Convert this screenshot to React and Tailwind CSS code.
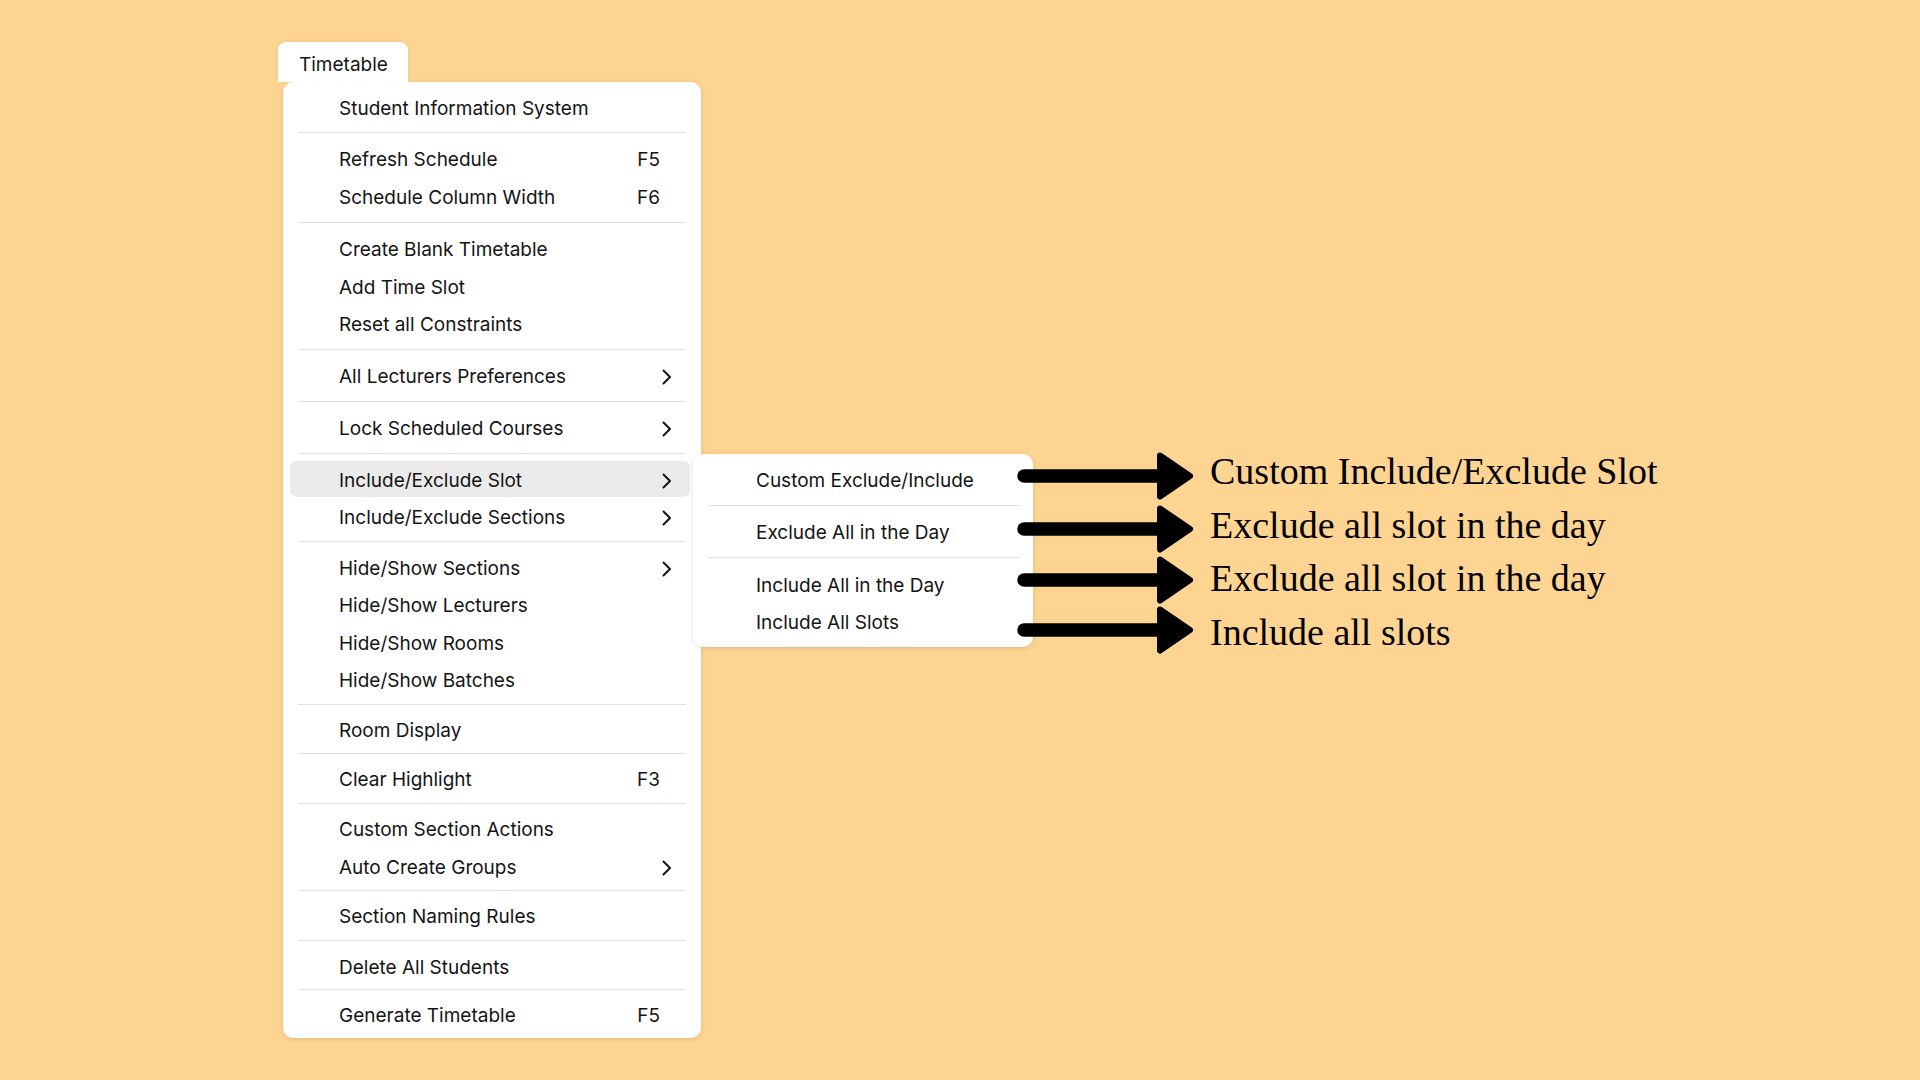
import React from 'react';

// separators carry their own height class (the spacing in the source isn't uniform)
const menu = [
  { label: 'Student Information System' },
  { sep: 'h-[14px]' },
  { label: 'Refresh Schedule', key: 'F5' },
  { label: 'Schedule Column Width', key: 'F6' },
  { sep: 'h-[15px]' },
  { label: 'Create Blank Timetable' },
  { label: 'Add Time Slot' },
  { label: 'Reset all Constraints' },
  { sep: 'h-[14px]' },
  { label: 'All Lecturers Preferences', sub: true },
  { sep: 'h-[15px]' },
  { label: 'Lock Scheduled Courses', sub: true },
  { sep: 'h-[14px]' },
  { label: 'Include/Exclude Slot', sub: true, open: true },
  { label: 'Include/Exclude Sections', sub: true },
  { sep: 'h-[13px]' },
  { label: 'Hide/Show Sections', sub: true },
  { label: 'Hide/Show Lecturers' },
  { label: 'Hide/Show Rooms' },
  { label: 'Hide/Show Batches' },
  { sep: 'h-[12.5px]' },
  { label: 'Room Display' },
  { sep: 'h-[11.5px]' },
  { label: 'Clear Highlight', key: 'F3' },
  { sep: 'h-[12.5px]' },
  { label: 'Custom Section Actions' },
  { label: 'Auto Create Groups', sub: true },
  { sep: 'h-[11.5px]' },
  { label: 'Section Naming Rules' },
  { sep: 'h-[13.5px]' },
  { label: 'Delete All Students' },
  { sep: 'h-[10.5px]' },
  { label: 'Generate Timetable', key: 'F5' },
];

const submenu = [
  'Custom Exclude/Include',
  'sep',
  'Exclude All in the Day',
  'sep',
  'Include All in the Day',
  'Include All Slots',
];

const notes = [
  'Custom Include/Exclude Slot',
  'Exclude all slot in the day',
  'Exclude all slot in the day',
  'Include all slots',
];

function Chevron() {
  return (
    <svg width="10" height="16" viewBox="0 0 10 16" fill="none">
      <path d="M1.5 1.5 L8 8 L1.5 14.5" stroke="#161616" strokeWidth="2.1" strokeLinecap="round" strokeLinejoin="round" />
    </svg>
  );
}

function Arrow() {
  return (
    <svg width="178" height="48" viewBox="0 0 178 48">
      <line x1="8" y1="24" x2="146" y2="24" stroke="#000" strokeWidth="13.5" strokeLinecap="round" />
      <polygon points="144,3.5 174,24 144,44.5" fill="#000" stroke="#000" strokeWidth="6" strokeLinejoin="round" />
    </svg>
  );
}

function Separator({ h, sub }) {
  return (
    <div className={`flex items-center ${h} ${sub ? 'pl-[15px] pr-[14px]' : 'px-[15px]'}`}>
      <div className="h-px w-full bg-[#e1e1e1]" />
    </div>
  );
}

function SubMenu() {
  return (
    <div className="absolute left-[410px] top-[-6px] w-[340px] h-[193px] bg-white rounded-[10px] shadow-[0_1px_5px_rgba(0,0,0,0.13)] pt-[6px] z-10">
      {submenu.map((item, i) =>
        item === 'sep' ? (
          <Separator key={i} h="h-[15px]" sub />
        ) : (
          <div key={i} className="h-[37.5px] flex items-center pl-[63px] pt-[4px]">
            {item}
          </div>
        )
      )}
    </div>
  );
}

export default function App() {
  return (
    <div className="relative min-h-screen w-full overflow-hidden bg-[#fed492] font-['Inter',sans-serif] text-[19px] text-[#141414]">
      <div className="pt-[42px] pl-[278px]">
        {/* menu bar tab */}
        <div className="relative z-10 w-[130px] h-[40px] bg-white rounded-t-[8px] flex items-center pl-[21px] pt-[6px] shadow-[0_-1px_3px_rgba(0,0,0,0.06)]">
          Timetable
        </div>

        {/* dropdown */}
        <div className="ml-[5px] w-[418px] bg-white rounded-[10px] shadow-[0_1px_5px_rgba(0,0,0,0.12)] pt-[6px] pb-[5px]">
          {menu.map((item, i) =>
            item.sep ? (
              <Separator key={i} h={item.sep} />
            ) : (
              <div key={i} className="relative h-[37.5px] pl-[7px] pr-[11px] py-[0.75px]">
                <div className={`h-full rounded-[7px] flex items-center pl-[49px] pr-[18px] pt-[4px] ${item.open ? 'bg-[#ebebeb]' : ''}`}>
                  <span className="flex-1">{item.label}</span>
                  {item.key && <span className="mr-[12px]">{item.key}</span>}
                  {item.sub && <Chevron />}
                </div>
                {item.open && <SubMenu />}
              </div>
            )
          )}
        </div>
      </div>

      {/* annotations */}
      <div className="absolute left-[1016px] top-[445px] z-20 flex items-start">
        <div className="mt-[7px] flex flex-col">
          <div className="h-[48px]"><Arrow /></div>
          <div className="h-[48px] mt-[5px]"><Arrow /></div>
          <div className="h-[48px] mt-[3px]"><Arrow /></div>
          <div className="h-[48px] mt-[2px]"><Arrow /></div>
        </div>
        <div className="ml-[16px] flex flex-col font-['Liberation_Serif',serif] text-[38px] leading-[53.5px] text-black whitespace-nowrap">
          {notes.map((n, i) => (
            <div key={i}>{n}</div>
          ))}
        </div>
      </div>
    </div>
  );
}
